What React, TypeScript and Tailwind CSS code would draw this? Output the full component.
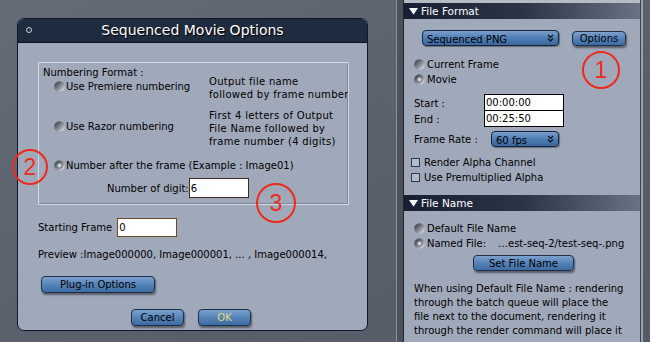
import React from 'react';

const font = { fontFamily: '"DejaVu Sans", Verdana, sans-serif' };

function Radio({ on = false }: { on?: boolean }) {
  const id = on ? 'rOn' : 'rOff';
  return (
    <svg width="11" height="11" viewBox="0 0 11 11" className="shrink-0">
      <defs>
        <linearGradient id={id} x1="0" y1="0" x2="1" y2="1">
          <stop offset="0" stopColor="#2a2d33" />
          <stop offset="0.55" stopColor="#8a8f98" />
          <stop offset="1" stopColor="#f2f3f5" />
        </linearGradient>
      </defs>
      <circle cx="5.5" cy="5.5" r="5.3" fill={`url(#${id})`} />
      {on && <circle cx="5.5" cy="5.5" r="2.6" fill="#c9ccd2" stroke="#3a3d44" strokeWidth="0.6" />}
    </svg>
  );
}

function Check() {
  return <div className="w-[9px] h-[9px] border border-[#2c3a55] bg-[#b3bccb] shrink-0" />;
}

function Chevrons() {
  return (
    <svg width="7" height="8" viewBox="0 0 7 8">
      <path d="M1 1 L3.5 3.5 L6 1 M1 4.5 L3.5 7 L6 4.5" fill="none" stroke="#111" strokeWidth="1.2" />
    </svg>
  );
}

function Btn({ children, className = '', yellow = false }: { children: React.ReactNode; className?: string; yellow?: boolean }) {
  return (
    <div
      className={`flex items-center justify-center rounded-[4px] border border-[#1d2f4a] bg-gradient-to-b from-[#7ba1cd] via-[#5683b8] to-[#3e6ba1] shadow-[1px_2px_2px_rgba(0,0,0,0.45)] text-[10px] ${yellow ? 'text-[#dede7a]' : 'text-black'} ${className}`}
    >
      {children}
    </div>
  );
}

function Select({ label, className = '' }: { label: string; className?: string }) {
  return (
    <div
      className={`flex items-center justify-between pl-[4px] pr-[4px] rounded-[4px] border border-[#16243a] bg-gradient-to-b from-[#7aa0cc] via-[#4f7db4] to-[#3b679c] shadow-[1px_1px_1px_rgba(0,0,0,0.35)] text-[10px] text-black ${className}`}
    >
      <span className="pt-[2px]">{label}</span>
      <Chevrons />
    </div>
  );
}

function PanelHeader({ title }: { title: string }) {
  return (
    <div className="h-[16px] flex items-center gap-[3px] pl-[5px] bg-gradient-to-r from-[#172033] via-[#2c3548] to-[#6a7285] text-white text-[10.5px]">
      <svg width="9" height="7" viewBox="0 0 9 7">
        <path d="M0 0 H9 L4.5 6.5 Z" fill="#fff" />
      </svg>
      <span>{title}</span>
    </div>
  );
}

function Callout({ n, x, y, r }: { n: string; x: number; y: number; r: number }) {
  return (
    <div className="absolute" style={{ left: x - r - 2, top: y - r - 2 }}>
      <svg width={2 * r + 4} height={2 * r + 4}>
        <circle cx={r + 2} cy={r + 2} r={r} fill="none" stroke="#ee2a1a" strokeWidth="2" />
        <text
          x={r + 2}
          y={r + 10}
          textAnchor="middle"
          fontSize="23"
          fill="#ee2a1a"
          style={{ fontFamily: '"Liberation Sans", Arial, sans-serif' }}
        >
          {n}
        </text>
      </svg>
    </div>
  );
}

export default function App() {
  return (
    <div
      className="relative w-[650px] h-[342px] overflow-hidden flex bg-gradient-to-br from-[#656c78] via-[#5a616c] to-[#555b66] text-black"
      style={font}
    >
      {/* Dialog area */}
      <div className="w-[396px] shrink-0 pl-[17px] pt-[18px]">
        <div className="w-[351px] h-[313px] rounded-[7px] border border-[#0f1828] overflow-hidden flex flex-col bg-[#a0a9ba]">
          <div className="relative h-[24px] shrink-0 bg-[#1f2b3f] flex items-center justify-center border-b border-[#0c1320]">
            <div className="absolute left-[8px] top-[8px] w-[6px] h-[6px] rounded-full border-[1.5px] border-[#c9cdd4]" />
            <span className="text-white text-[14px] [text-shadow:1px_1px_1px_#000]">Sequenced Movie Options</span>
          </div>

          <div className="flex flex-col pl-[20px] pt-[19px] text-[10px] leading-[13px]">
            {/* Numbering group */}
            <div className="w-[311px] h-[143px] border border-[#d3d9e3] shadow-[inset_-1px_-1px_0_#7f889a] pl-[4px] pt-[3px] overflow-hidden">
              <div>Numbering Format :</div>
              <div className="flex mt-[-4px]">
                <div className="w-[166px] shrink-0 pl-[11px] flex items-center gap-[1px] pb-[4px]">
                  <Radio />
                  <span>Use Premiere numbering</span>
                </div>
                <div className="whitespace-nowrap tracking-[0.3px]">
                  <div>Output file name</div>
                  <div>followed by frame number</div>
                </div>
              </div>
              <div className="flex mt-[8px]">
                <div className="w-[166px] shrink-0 pl-[11px] flex items-center gap-[1px] pb-[4px]">
                  <Radio />
                  <span>Use Razor numbering</span>
                </div>
                <div className="whitespace-nowrap tracking-[0.3px]">
                  <div>First 4 letters of Output</div>
                  <div>File Name followed by</div>
                  <div>frame number (4 digits)</div>
                </div>
              </div>
              <div className="pl-[11px] mt-[11px] flex items-center gap-[1px] w-[252px] overflow-hidden whitespace-nowrap">
                <Radio on />
                <span>Number after the frame (Example : Image01)</span>
              </div>
              <div className="flex items-center mt-[6px] pl-[64px]">
                <span>Number of digit:</span>
                <div className="w-[60px] h-[20px] bg-white border border-[#3a2c1e] pl-[1px] flex items-center">6</div>
              </div>
            </div>

            <div className="flex items-center mt-[13px]">
              <span className="pr-[5px]">Starting Frame</span>
              <div className="w-[60px] h-[19px] bg-white border border-[#6b4a2a] pl-[1px] flex items-center">0</div>
            </div>
            <div className="mt-[11px]">Preview :Image000000, Image000001, ... , Image000014,</div>
            <Btn className="w-[114px] h-[17px] mt-[15px] ml-[3px]">Plug-in Options</Btn>
            <div className="flex gap-[14px] mt-[16px] ml-[93px]">
              <Btn className="w-[53px] h-[17px]">Cancel</Btn>
              <Btn className="w-[53px] h-[17px]" yellow>
                OK
              </Btn>
            </div>
          </div>
        </div>
      </div>

      {/* Divider strip */}
      <div className="w-[8px] shrink-0 flex">
        <div className="w-[1px] bg-[#8c93a0]" />
        <div className="w-[6px] bg-[#4c515b]" />
        <div className="w-[1px] bg-[#23272e]" />
      </div>

      {/* Right panel */}
      <div className="w-[236px] shrink-0 bg-[#a0a9ba] flex flex-col text-[10px] leading-[13px]">
        <div className="h-[3px] bg-[#b6bcc6]" />
        <PanelHeader title="File Format" />
        <div className="flex items-center mt-[11px] pl-[18px]">
          <Select label="Sequenced PNG" className="w-[137px] h-[16px]" />
          <Btn className="w-[54px] h-[15px] ml-[13px]">Options</Btn>
        </div>
        <div className="flex flex-col pl-[10px] mt-[11px]">
          <div className="h-[15px] flex items-center gap-[2px]">
            <Radio />
            <span>Current Frame</span>
          </div>
          <div className="h-[15px] flex items-center gap-[2px]">
            <Radio on />
            <span>Movie</span>
          </div>
        </div>
        <div className="flex pl-[10px] mt-[7px]">
          <div className="w-[70px] flex flex-col pt-[1px]">
            <div className="h-[16px] flex items-center">Start :</div>
            <div className="h-[16px] flex items-center">End :</div>
          </div>
          <div className="w-[80px] flex flex-col border border-black bg-white">
            <div className="h-[16px] flex items-center pl-[1px] border-b border-black">00:00:00</div>
            <div className="h-[15px] flex items-center pl-[1px]">00:25:50</div>
          </div>
        </div>
        <div className="flex items-center pl-[10px] mt-[4px]">
          <span className="w-[77px]">Frame Rate :</span>
          <Select label="60 fps" className="w-[68px] h-[16px]" />
        </div>
        <div className="flex flex-col pl-[7px] mt-[8px]">
          <div className="h-[15px] flex items-center gap-[4px]">
            <Check />
            <span>Render Alpha Channel</span>
          </div>
          <div className="h-[15px] flex items-center gap-[4px]">
            <Check />
            <span>Use Premultiplied Alpha</span>
          </div>
        </div>
        <div className="mt-[10px]">
          <PanelHeader title="File Name" />
        </div>
        <div className="flex flex-col pl-[10px] mt-[10px]">
          <div className="h-[15px] flex items-center gap-[2px]">
            <Radio />
            <span>Default File Name</span>
          </div>
          <div className="h-[15px] flex items-center gap-[2px]">
            <Radio on />
            <span className="w-[69px]">Named File:</span>
            <span>…est-seq-2/test-seq-.png</span>
          </div>
        </div>
        <Btn className="w-[101px] h-[16px] ml-[69px] mt-[4px]">Set File Name</Btn>
        <div className="pl-[10px] mt-[11px] leading-[14px] whitespace-nowrap">
          <div>When using Default File Name : rendering</div>
          <div>through the batch queue will place the</div>
          <div>file next to the document, rendering it</div>
          <div>through the render command will place it</div>
        </div>
      </div>

      {/* Right edge */}
      <div className="w-[10px] shrink-0 flex">
        <div className="w-[1px] bg-[#3c414a]" />
        <div className="w-[2px] bg-[#9aa1ad]" />
        <div className="flex-1" />
      </div>

      <Callout n="1" x={601} y={70} r={18} />
      <Callout n="2" x={30} y={167} r={17} />
      <Callout n="3" x={276} y={203} r={19} />
    </div>
  );
}
